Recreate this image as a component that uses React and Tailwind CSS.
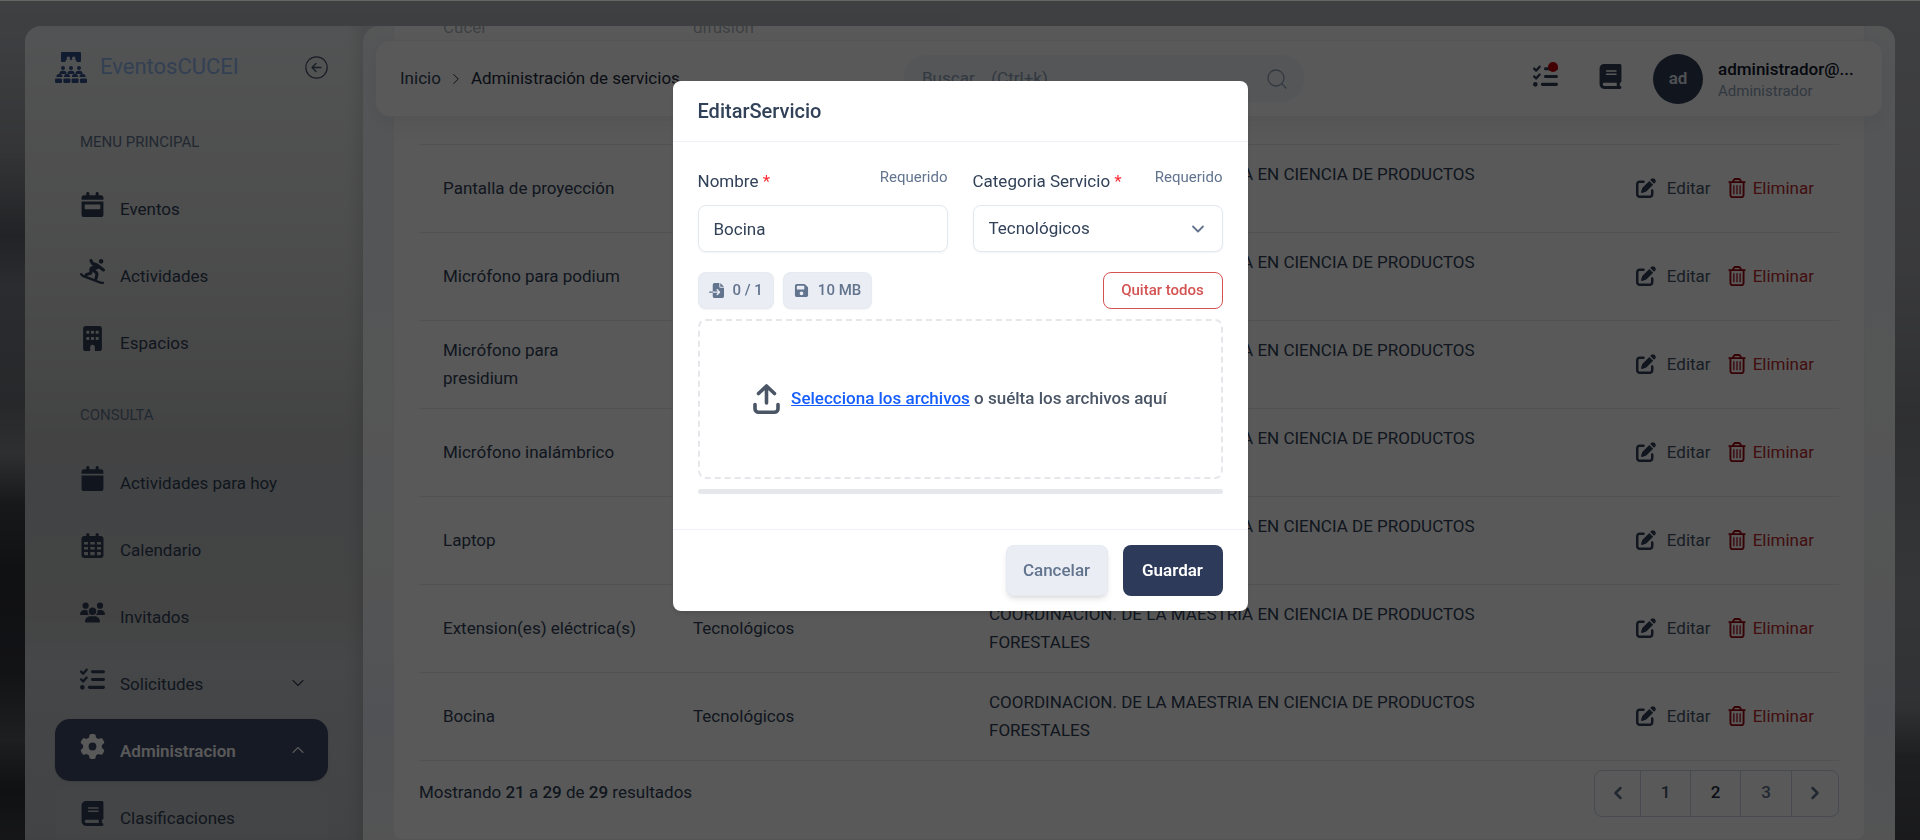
import { useState } from 'react'
import {
  FaBook,
  FaBuilding,
  FaCalendar,
  FaCalendarWeek,
  FaFileImport,
  FaFloppyDisk,
  FaGear,
  FaListCheck,
  FaPenToSquare,
  FaPersonSnowboarding,
  FaRegTrashCan,
  FaUsers
} from 'react-icons/fa6'
import { ChevronDown, ChevronLeft, ChevronRight, ChevronUp, Search } from 'lucide-react'

const CalendarGrid = ({ className }) => (
  <svg viewBox="0 0 25 25" className={className} fill="currentColor" aria-hidden="true">
    <path
      fillRule="evenodd"
      d="M7.800 0a1.600 1.600 0 0 1 1.600 1.600v1.500h6.200V1.600a1.600 1.600 0 0 1 3.200 0v1.500h1.800a2.900 2.900 0 0 1 2.900 2.900v16a2.900 2.900 0 0 1-2.900 2.900H4.400A2.900 2.900 0 0 1 1.500 22V6a2.900 2.900 0 0 1 2.900-2.900h1.800V1.600A1.600 1.600 0 0 1 7.800 0zM4 9v2.600h4V9zm6.300 0v2.600h4.400V9zm6.700 0v2.600h4V9zM4 14v2.600h4V14zm6.300 0v2.600h4.400V14zm6.700 0v2.600h4V14zM4 19v2c0 .700.400 1.200 1.200 1.200H8V19zm6.300 0v3.200h4.400V19zm6.700 0v3.200h2.800c.800 0 1.200-.500 1.200-1.200v-2z"
    />
  </svg>
)

const mainLinks = [
  { label: 'Eventos', icon: FaCalendarWeek },
  { label: 'Actividades', icon: FaPersonSnowboarding },
  { label: 'Espacios', icon: FaBuilding }
]

const consultaLinks = [
  { label: 'Actividades para hoy', icon: FaCalendar },
  { label: 'Calendario', icon: CalendarGrid },
  { label: 'Invitados', icon: FaUsers },
  { label: 'Solicitudes', icon: FaListCheck, chevron: 'down' },
  { label: 'Administracion', icon: FaGear, chevron: 'up', active: true }
]

const dependencia = 'COORDINACION. DE LA MAESTRIA EN CIENCIA DE PRODUCTOS FORESTALES'

const servicios = [
  'Pantalla de proyección',
  'Micrófono para podium',
  'Micrófono para\npresidium',
  'Micrófono inalámbrico',
  'Laptop',
  'Extension(es) eléctrica(s)',
  'Bocina'
]

const Logo = () => (
  <svg viewBox="0 0 32 31" className="h-[31px] w-8 text-[#35508c]" fill="currentColor" aria-hidden="true">
    <path
      fillRule="evenodd"
      d="M7 0h18a1 1 0 0 1 1 1v8a1 1 0 0 1-1 1h-3.500V9a1.600 1.600 0 0 0-1.600-1.600 1.700 1.700 0 1 0-2.400 0 1.600 1.600 0 0 0-1.500 1 1.600 1.600 0 0 0-1.500-1 1.700 1.700 0 1 0-2.400 0A1.600 1.600 0 0 0 10.500 9v1H7a1 1 0 0 1-1-1V1a1 1 0 0 1 1-1z"
    />
    {[8, 16, 24].map((x) => (
      <g key={x}>
        <circle cx={x} cy="16" r="2" />
        <path d={`M${x - 3.5} 22v-.500a2.800 2.800 0 0 1 2.800-2.800h1.400a2.800 2.800 0 0 1 2.800 2.800v.500z`} />
      </g>
    ))}
    {[4.5, 12, 20, 27.5].map((x) => (
      <path key={x} d={`M${x - 3} 25v-.500a2.500 2.500 0 0 1 2.500-2.500h1a2.500 2.500 0 0 1 2.500 2.500v.500z`} />
    ))}
    {[0, 8.4, 16.600, 25].map((x) => (
      <rect key={x} x={x} y="26.500" width="7" height="4.500" rx="1" />
    ))}
  </svg>
)

const CircleArrow = () => (
  <svg viewBox="0 0 23 23" className="size-[23px]" fill="none" stroke="currentColor" strokeLinecap="round" strokeLinejoin="round" aria-hidden="true">
    <circle cx="11.500" cy="11.500" r="10.700" strokeWidth="1.200" />
    <path d="M16 11.500H7M11 7.500l-4 4 4 4" strokeWidth="1.300" />
  </svg>
)

const UploadIcon = () => (
  <svg viewBox="0 0 27 30" className="h-[30px] w-[27px] text-gray-600" fill="none" stroke="currentColor" strokeWidth="3.600" strokeLinecap="round" strokeLinejoin="round" aria-hidden="true">
    <path d="M13.500 19V2.500M5.500 9.500l8-7.500 8 7.500" />
    <path d="M2 20.500v4.200a3.500 3.500 0 0 0 3.500 3.500h16a3.500 3.500 0 0 0 3.500-3.500v-4.200" />
  </svg>
)

const MenuItem = ({ label, icon: Icon, chevron, active }) => (
  <a
    href="#"
    className={`flex h-[62px] items-center rounded-[15px] pt-1 pr-5 pl-[25px] text-[17px] ${active
      ? 'bg-[#3f4a69] font-semibold text-white shadow-sm'
      : 'text-slate-700'
      }`}
  >
    <Icon className="mb-3 size-[25px]" />
    <span className="ml-[15px] flex-1">{label}</span>
    {chevron === 'down' && <ChevronDown className="mb-1 size-5" strokeWidth={1.3} />}
    {chevron === 'up' && <ChevronUp className="mb-1 size-5" strokeWidth={1.3} />}
  </a>
)

const Sidebar = () => (
  <aside className="w-[338px] shrink-0 bg-[linear-gradient(180deg,#eceff0_0%,#e2e3e4_16%,#dadbdc_28%,#cdcecf_40%,#c0c1c2_50%,#bdc1c5_58%,#c3c3c3_72%,#c6cacd_78%,#bfc1c4_100%)] pr-[35px] pl-[30px] shadow-[inset_-12px_0_16px_-8px_rgba(0,0,0,0.12)]">
    <div className="flex items-center pt-[25px]">
      <Logo />
      <span className="ml-[13px] flex-1 text-[22px] leading-8 text-[#93b8ee]">EventosCUCEI</span>
      <button type="button" aria-label="Contraer menú" className="text-slate-600">
        <CircleArrow />
      </button>
    </div>

    <nav>
      <h2 className="mt-[49px] px-[25px] text-[15px] leading-5 text-slate-500">MENU PRINCIPAL</h2>
      <div className="mt-[25px] flex flex-col gap-[5px]">
        {mainLinks.map((link) => <MenuItem key={link.label} {...link} />)}
      </div>
      <h2 className="mt-8 px-[25px] text-[15px] leading-5 text-slate-500">CONSULTA</h2>
      <div className="mt-[26px] flex flex-col gap-[5px]">
        {consultaLinks.map((link) => <MenuItem key={link.label} {...link} />)}
      </div>
      <div className="mt-[5px] rounded-[15px] bg-white/5">
        <MenuItem label="Clasificaciones" icon={FaBook} />
      </div>
    </nav>
  </aside>
)

const Header = () => (
  <header className="absolute inset-x-3 top-[14px] z-10 flex h-[77px] items-center rounded-[15px] border border-slate-200/60 bg-[#fefefe] px-6 text-[17px] shadow-[0_8px_20px_rgba(0,0,0,0.06)]">
    <nav aria-label="Ruta" className="flex flex-1 items-center text-slate-800">
      <a href="#" className="text-slate-700">Inicio</a>
      <ChevronRight className="mx-[6px] size-[18px]" strokeWidth={1.3} />
      <span>Administración de servicios</span>
    </nav>

    <label className="flex h-[47px] w-[400px] items-center rounded-full bg-slate-100 pr-[15px] pl-[18px] text-slate-400">
      <input type="search" aria-label="Buscar" placeholder="Buscar... (Ctrl+k)" className="min-w-0 flex-1 bg-transparent outline-none placeholder:text-slate-400" />
      <Search className="size-6" strokeWidth={1.3} />
    </label>

    <div className="flex w-[554px] items-center justify-end pr-[3px] text-slate-700">
      <button type="button" aria-label="Pendientes" className="relative mb-1">
        <FaListCheck className="size-[25px]" />
        <span className="absolute -top-[2px] right-0 size-[10px] rounded-full bg-red-700" />
      </button>
      <button type="button" aria-label="Manual" className="mb-1 ml-10">
        <FaBook className="size-[25px]" />
      </button>
      <span className="ml-[30px] flex size-[50px] items-center justify-center rounded-full bg-slate-700 font-semibold text-slate-200">ad</span>
      <div className="ml-[15px] w-[137px]">
        <p className="leading-6 font-medium whitespace-nowrap text-slate-900">administrador@...</p>
        <p className="text-[15px] leading-5 text-slate-400">Administrador</p>
      </div>
    </div>
  </header>
)

const RowActions = () => (
  <div className="flex items-center justify-end">
    <button type="button" className="flex items-center gap-[11px] text-slate-600">
      <FaPenToSquare className="size-5 text-slate-700" />
      Editar
    </button>
    <button type="button" className="ml-4 flex items-center gap-[6px] text-[#b92c2c]">
      <FaRegTrashCan className="size-5 text-red-800" />
      Eliminar
    </button>
  </div>
)

const Pagination = () => (
  <nav aria-label="Paginación" className="flex h-[47px] divide-x divide-slate-300 rounded-lg border border-slate-300 font-medium text-slate-500">
    <button type="button" aria-label="Anterior" className="flex w-[46px] items-center justify-center">
      <ChevronLeft className="size-5" strokeWidth={3} />
    </button>
    <button type="button" className="w-[50px] text-slate-600">1</button>
    <button type="button" className="w-[50px] text-slate-800">2</button>
    <button type="button" className="w-[51px]">3</button>
    <button type="button" aria-label="Siguiente" className="flex w-[46px] items-center justify-center">
      <ChevronRight className="size-5" strokeWidth={3} />
    </button>
  </nav>
)

const ServiciosTable = () => (
  <div className="-mt-2 mr-[30px] ml-[30px] rounded-lg border border-slate-200/60 bg-[#fefefe] px-[25px] pb-[22px] text-[17px] text-slate-700">
    <table className="w-full table-fixed border-collapse leading-7">
      <colgroup>
        <col className="w-[250px]" />
        <col className="w-[295px]" />
        <col className="w-[595px]" />
        <col />
      </colgroup>
      <tbody>
        <tr className="h-[125px] border-b border-slate-200 align-top text-slate-700/40">
          <td className="px-6 leading-none">Cucei</td>
          <td className="px-6 leading-none">difusión</td>
          <td />
          <td />
        </tr>
        {servicios.map((nombre) => (
          <tr key={nombre} className="h-[88px] border-b border-slate-200">
            <td className="px-6 whitespace-pre-line">{nombre}</td>
            <td className="px-6">Tecnológicos</td>
            <td className="pr-[50px] pl-[25px]">{dependencia}</td>
            <td className="pr-[25px]"><RowActions /></td>
          </tr>
        ))}
      </tbody>
    </table>

    <div className="mt-[9px] flex items-center justify-between">
      <p>
        Mostrando <span className="font-medium">21</span> a <span className="font-medium">29</span> de{' '}
        <span className="font-medium">29</span> resultados
      </p>
      <Pagination />
    </div>
  </div>
)

const FieldLabel = ({ htmlFor, children }) => (
  <div className="flex h-8 items-start justify-between">
    <label htmlFor={htmlFor} className="text-[17px] leading-8">
      {children} <span className="text-red-500">*</span>
    </label>
    <span className="text-[15px] leading-6 text-slate-500">Requerido</span>
  </div>
)

const EditModal = () => {
  const [nombre, setNombre] = useState('Bocina')
  const [categoria, setCategoria] = useState('Tecnológicos')

  return (
    <form
      role="dialog"
      aria-labelledby="modal-title"
      onSubmit={(e) => e.preventDefault()}
      className="w-[575px] rounded-lg bg-white text-[17px] text-slate-700 shadow-md"
    >
      <div className="border-b border-slate-200/60 px-[25px] py-4">
        <h2 id="modal-title" className="text-xl leading-7 font-medium">EditarServicio</h2>
      </div>

      <div className="px-[25px] pt-[23px] pb-[35px]">
        <div className="grid grid-cols-2 gap-[25px]">
          <div>
            <FieldLabel htmlFor="nombre">Nombre</FieldLabel>
            <input
              id="nombre"
              value={nombre}
              onChange={(e) => setNombre(e.target.value)}
              className="mt-2 h-[47px] w-full rounded-lg border border-slate-200 px-[15px] shadow-xs outline-none"
            />
          </div>
          <div>
            <FieldLabel htmlFor="categoria">Categoria Servicio</FieldLabel>
            <div className="relative mt-2">
              <select
                id="categoria"
                value={categoria}
                onChange={(e) => setCategoria(e.target.value)}
                className="h-[47px] w-full appearance-none rounded-lg border border-slate-200 bg-white px-[15px] shadow-xs outline-none"
              >
                <option>Tecnológicos</option>
              </select>
              <ChevronDown className="pointer-events-none absolute top-[14px] right-[15px] size-5 text-slate-500" strokeWidth={2.2} />
            </div>
          </div>
        </div>

        <div className="mt-5 flex h-[37px] gap-[9px] text-[15px] font-medium">
          <span className="flex items-center gap-[9px] rounded-lg border border-slate-200/60 bg-[#eaedf3] px-[10px] text-slate-500 shadow-xs">
            <FaFileImport className="size-[15px]" /> 0 / 1
          </span>
          <span className="flex items-center gap-[9px] rounded-lg border border-slate-200/60 bg-[#eaedf3] px-[10px] text-slate-500 shadow-xs">
            <FaFloppyDisk className="size-[15px]" /> 10 MB
          </span>
          <button type="button" className="ml-auto w-[120px] rounded-lg border border-[#d35353] text-[#d35353]">Quitar todos</button>
        </div>

        <div className="mt-[10px] flex h-40 items-center justify-center gap-[11px] rounded-lg border-2 border-dashed border-gray-200 font-medium text-gray-600">
          <UploadIcon />
          <p>
            <button type="button" className="text-blue-600 underline">Selecciona los archivos</button> o suélta los archivos aquí
          </p>
        </div>
        <div className="mt-[10px] h-[5px] rounded-full bg-gray-200" />
      </div>

      <div className="flex justify-end gap-[15px] border-t border-slate-200/60 px-[25px] py-[15px] font-medium">
        <button type="button" className="h-[51px] w-[102px] rounded-lg border border-slate-200/60 bg-[#eaedf3] text-slate-500 shadow-md">Cancelar</button>
        <button type="submit" className="h-[51px] w-[100px] rounded-lg bg-[#2d3a59] font-semibold text-white">Guardar</button>
      </div>
    </form>
  )
}

const App = () => (
  <div className="h-screen overflow-hidden bg-[#b5b8bd] bg-[linear-gradient(180deg,#b5b8bd_0%,#b0b3ba_5%,#96989f_18%,#62656d_28%,#7b7e86_34%,#70737a_48%,#85878c_54%,#45474d_60%,#2f3137_68%,#35373e_80%,#57595e_88%,#2f3136_94%,#3f4147_100%),linear-gradient(180deg,#b5b8bd_0%,#b0b1b8_14%,#a5a6ad_32%,#86888e_50%,#989ba1_70%,#8c8e95_84%,#585a60_90%,#4a4b50_100%)] bg-[size:50%_100%] bg-[position:left,right] bg-no-repeat font-[Roboto,sans-serif]">
    <div className="flex h-full px-[25px] pt-[26px]">
      <div className="flex flex-1 overflow-hidden rounded-t-[16px] bg-[#d8dadc]">
        <Sidebar />
        <main className="relative min-w-0 flex-1 overflow-hidden rounded-tl-[16px] bg-[linear-gradient(180deg,#f2f5f6_0%,#eff3f9_20%,#f3f5f6_45%,#eff1f3_70%,#e9ecf5_85%,#eff0f1_100%)]">
          <Header />
          <ServiciosTable />
        </main>
      </div>
    </div>

    <div className="fixed inset-0 z-20 flex items-start justify-center border-t border-[#646761] bg-black/65 pt-20">
      <EditModal />
    </div>
  </div>
)

export default App
